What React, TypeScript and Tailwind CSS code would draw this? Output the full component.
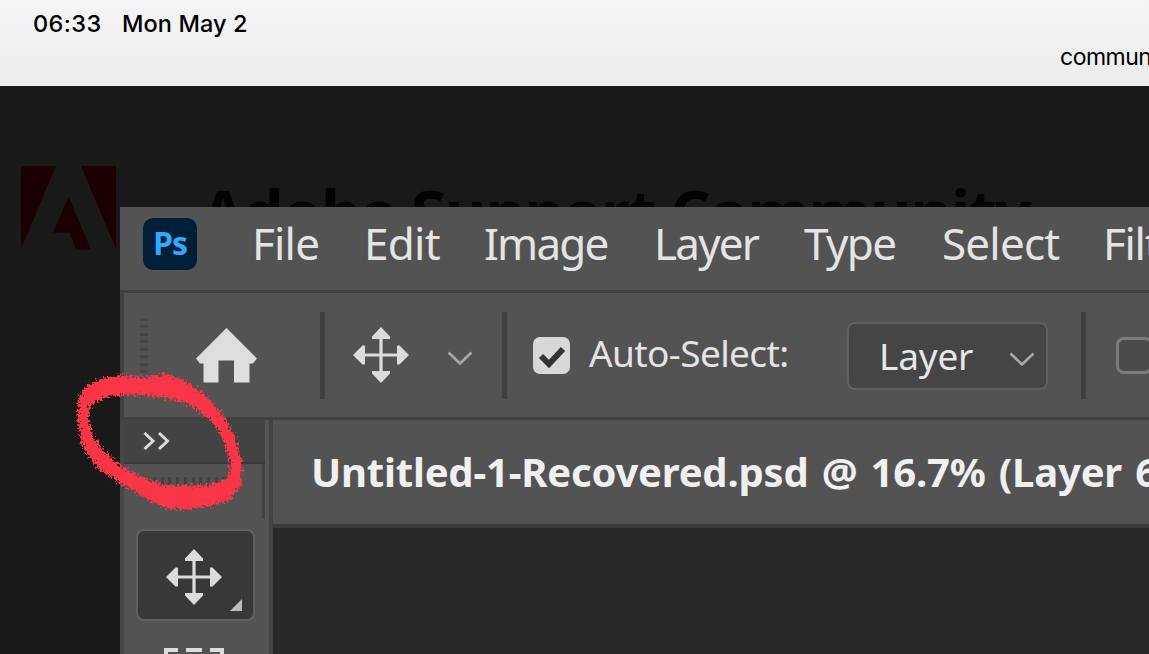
import React from "react";
import clsx from "clsx";

interface MenuItem {
  label: string;
  className: string;
}

const menuItems: MenuItem[] = [
  { label: "File", className: "w-[112px] tracking-[-0.8px]" },
  { label: "Edit", className: "w-[120px] tracking-[-0.7px]" },
  { label: "Image", className: "w-[170px] tracking-[-1.8px]" },
  { label: "Layer", className: "w-[150px] tracking-[-1.8px]" },
  { label: "Type", className: "w-[138px] tracking-[-1.6px]" },
  { label: "Select", className: "w-[161px] tracking-[-0.8px]" },
  { label: "Filter", className: "w-[120px] tracking-[-1.3px]" },
];

const MoveIcon = () => (
  <svg className="h-14 w-14 shrink-0" viewBox="0 0 56 56" fill="#dcdcdc">
    <path d="M28 0 37 9.5V12H29.6V26.4H44V18.5H46.5L56 28 46.5 37.5H44V29.6H29.6V44H37V46.5L28 56 19 46.5V44H26.4V29.6H12V37.5H9.5L0 28 9.5 18.5H12V26.4H26.4V12H19V9.5Z" />
  </svg>
);

const HomeIcon = () => (
  <svg className="h-[55px] w-[61px] shrink-0" viewBox="0 0 61 55" fill="#dedede">
    <path d="M30.5 0 61 30.5 57 35.5H53.500V54.500H38V32.500H22.500V54.500H7.500V35.500H4L0 30.500Z" />
  </svg>
);

const Chevron = () => (
  <svg className="h-[14px] w-[26px] shrink-0" viewBox="0 0 26 14" fill="none">
    <path d="M1.500 1.500 13 12.500 24.500 1.500" stroke="#a8a8a8" strokeWidth="2.600" />
  </svg>
);

const Separator = () => <div className="h-[87px] w-[5px] shrink-0 bg-[#404040]" />;

// Status bar at the top of the tablet
const StatusBar = () => (
  <header className="flex h-[86px] justify-between bg-linear-to-b from-[#f5f5f7] to-[#ececed] font-['Inter',sans-serif] text-black">
    <div className="flex pt-[9px] pl-[33px] text-[23.500px] leading-[30px] font-medium">
      <span className="w-[89px] tracking-[0.4px]">06:33</span>
      <span className="tracking-[0.1px] whitespace-nowrap">Mon May 2</span>
    </div>
    <div className="w-[89px] overflow-hidden pt-[42px] text-[23px] leading-[30px] tracking-[-0.5px] whitespace-nowrap">
      community
    </div>
  </header>
);

// Dimmed web page behind the opened picture
const CommunityHeader = () => (
  <div className="flex pt-20 pl-[21px]">
    <svg className="h-[84px] w-[95px] shrink-0" viewBox="0 0 95 84" fill="#1a0001">
      <path d="M0 0H35L0 83ZM60 0H95V83ZM47.500 31 70 83.500H55L48.500 66.500H32Z" />
    </svg>
    <h1 className="ml-[85px] pt-[7px] font-['Open_Sans',sans-serif] text-[64px] leading-[80px] font-bold tracking-[-1.550px] whitespace-nowrap text-[#020202]">
      Adobe Support Community
    </h1>
  </div>
);

const MenuBar = () => (
  <nav className="flex h-[83px] shrink-0 items-start pl-[23px]">
    <div className="mt-[11px] flex h-[52px] w-[54px] shrink-0 items-center justify-center rounded-[10px] bg-[#001e36]">
      <span className="pb-[2px] font-['Open_Sans',sans-serif] text-[32px] leading-none font-bold tracking-[-1px] text-[#31a8ff]">
        Ps
      </span>
    </div>
    <ul className="ml-[55px] flex text-[44px] leading-[44px] text-[#e4e4e4]">
      {menuItems.map((item) => (
        <li key={item.label} className={clsx("mt-[14px] shrink-0 whitespace-nowrap", item.className)}>
          {item.label}
        </li>
      ))}
    </ul>
  </nav>
);

const OptionsBar = () => (
  <div className="flex h-[130px] shrink-0 items-center border-y-[3px] border-l-4 border-[#404040] pl-4">
    <div className="flex h-[75px] w-2 shrink-0 flex-col gap-[4.500px]">
      {Array.from({ length: 10 }, (_, i) => (
        <div key={i} className="h-[3px] w-2 shrink-0 bg-[#464646]" />
      ))}
    </div>
    <div className="ml-12">
      <HomeIcon />
    </div>
    <div className="ml-[63px]">
      <Separator />
    </div>
    <div className="ml-7">
      <MoveIcon />
    </div>
    <div className="mt-[5px] ml-[38px]">
      <Chevron />
    </div>
    <div className="ml-[29px]">
      <Separator />
    </div>
    <div className="mt-[1px] ml-[26px] flex h-[37px] w-[37px] shrink-0 items-center justify-center rounded-[7px] bg-[#d8d8d8]">
      <svg className="mt-[3px] h-6 w-7" viewBox="0 0 28 24" fill="none">
        <path d="M3 11 11 19 25 4" stroke="#343434" strokeWidth="6" />
      </svg>
    </div>
    <span className="mb-[4px] ml-[19px] w-[258px] shrink-0 text-[37px] leading-[50px] tracking-[-0.6px] whitespace-nowrap text-[#e4e4e4]">
      Auto-Select:
    </span>
    <div className="mt-[2px] flex h-[68px] w-[201px] shrink-0 items-center justify-between rounded-[8px] border-2 border-[#616161] bg-[#454545] pr-[11px] pl-[30px]">
      <span className="text-[37px] leading-[50px] tracking-[-0.2px] text-[#e8e8e8]">Layer</span>
      <div className="mt-[6px]">
        <Chevron />
      </div>
    </div>
    <div className="ml-[33px]">
      <Separator />
    </div>
    <div className="mt-[1px] ml-[30px] h-[37px] w-[37px] shrink-0 rounded-[8px] border-[3px] border-[#7b7b7b] bg-[#4b4b4b]" />
  </div>
);

const ToolPanel = () => (
  <aside className="flex w-[153px] shrink-0 border-l-4 border-[#464646]">
    <div className="w-[141px] shrink-0">
      <div className="flex h-[44px] items-center border-b-2 border-[#393939] bg-[#434343] pl-[19px]">
        <svg className="h-[18px] w-[27px]" viewBox="0 0 27 18" fill="none">
          <path d="M1.500 1 10 9 1.500 17M16 1 24.500 9 16 17" stroke="#dadada" strokeWidth="3" />
        </svg>
      </div>
      <div className="flex h-[55px] justify-center gap-[4.700px] border-r-[3px] border-[#434343] pt-[13px]">
        {Array.from({ length: 11 }, (_, i) => (
          <div key={i} className="h-[9px] w-[3px] bg-[#434343]" />
        ))}
      </div>
      <div className="mt-[10px] ml-3 flex h-[92px] w-[119px] items-end rounded-[8px] border-2 border-[#606060] bg-[#383838] pl-[28px]">
        <div className="mb-[14px]">
          <MoveIcon />
        </div>
        <svg className="mb-[8px] ml-2 h-3 w-3" viewBox="0 0 12 12" fill="#bdbdbd">
          <path d="M12 0V12H0Z" />
        </svg>
      </div>
      <svg className="mt-[27px] ml-10 h-[30px] w-[60px]" viewBox="0 0 60 30" fill="none">
        <path d="M2 14V2H14M22 2H38M46 2H58V14" stroke="#dcdcdc" strokeWidth="4" />
      </svg>
    </div>
    <div className="ml-[4px] flex-1 bg-[#434343]" />
  </aside>
);

const PhotoshopWindow = () => (
  <section className="absolute top-[207px] left-[120px] flex h-[447px] w-[1029px] flex-col overflow-hidden bg-[#535353] font-['Noto_Sans',sans-serif]">
    <MenuBar />
    <OptionsBar />
    <div className="flex flex-1">
      <ToolPanel />
      <main className="flex w-[876px] shrink-0 flex-col">
        <div className="h-[108px] overflow-hidden border-b-4 border-[#3b3b3b] pt-[25px] pl-[38px] text-[40px] leading-[54px] font-bold tracking-[-0.2px] [word-spacing:3px] whitespace-nowrap text-[#f0f0f0]">
          Untitled-1-Recovered.psd @ 16.7% (Layer 6
        </div>
        <div className="flex-1 bg-[#282828]" />
      </main>
    </div>
  </section>
);

// Hand-drawn crayon ring around the expand arrows
const RedCircle = () => (
  <svg className="absolute top-[360px] left-[65px] h-[160px] w-[190px]" viewBox="65 360 190 160">
    <filter id="crayon" x="-10%" y="-10%" width="120%" height="120%">
      <feTurbulence type="fractalNoise" baseFrequency="0.400" numOctaves="3" seed="4" result="noise" />
      <feDisplacementMap in="SourceGraphic" in2="noise" scale="12" xChannelSelector="R" yChannelSelector="G" />
    </filter>
    <path
      filter="url(#crayon)"
      fill="#f93446"
      fillRule="evenodd"
      d="M77 417 79 398 87 385 103 378 123 375 143 377 167 374 183 380 203 393 223 415 235 437 242 463 241 485 230 500 207 507 183 510 163 507 140 495 120 483 97 467 83 448ZM89 420 90 406 103 398 127 394 153 396 177 400 193 407 210 420 223 438 230 460 229 477 217 483 200 486 183 485 163 485 143 478 120 465 103 450 93 437Z"
    />
  </svg>
);

const App = () => {
  return (
    <div className="relative h-[654px] w-[1149px] overflow-hidden bg-[#191919]">
      <StatusBar />
      <CommunityHeader />
      <PhotoshopWindow />
      <RedCircle />
    </div>
  );
};

export default App;
